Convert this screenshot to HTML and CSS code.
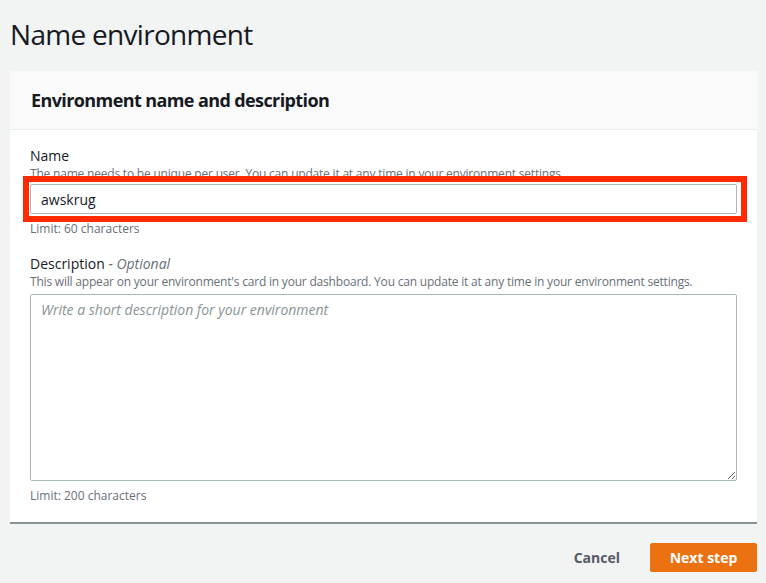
FILE: index.html
```html
<!DOCTYPE html>
<html lang="en">
<head>
<meta charset="utf-8">
<title>Name environment</title>
<link rel="stylesheet" href="styles.css">
</head>
<body>
<div class="page">
  <h1 class="title">Name environment</h1>
  <section class="card">
    <div class="card-header">
      <h2 class="card-title">Environment name and description</h2>
    </div>
    <div class="card-body">
      <div class="field">
        <label class="label" for="name">Name</label>
        <div class="hint">The name needs to be unique per user. You can update it at any time in your environment settings.</div>
        <div class="control">
          <input id="name" class="input" type="text" value="awskrug">
          <div class="highlight"></div>
        </div>
        <div class="limit">Limit: 60 characters</div>
      </div>
      <div class="field field-desc">
        <label class="label" for="desc">Description <span class="optional">- Optional</span></label>
        <div class="hint">This will appear on your environment's card in your dashboard. You can update it at any time in your environment settings.</div>
        <textarea id="desc" class="textarea" placeholder="Write a short description for your environment"></textarea>
        <div class="limit">Limit: 200 characters</div>
      </div>
    </div>
  </section>
  <div class="actions">
    <button class="btn-link" type="button">Cancel</button>
    <button class="btn-primary" type="button">Next step</button>
  </div>
</div>
</body>
</html>
```
FILE: styles.css
```css
* { box-sizing: border-box; }
html, body { margin: 0; padding: 0; }
body {
  background: #f2f3f3;
  font-family: "Open Sans", "Noto Sans", sans-serif;
  color: #16191f;
  width: 766px;
  height: 583px;
  overflow: hidden;
}
.page {
  padding: 0 9px 0 10px;
}
.title {
  margin: 0;
  padding-top: 15px;
  height: 71px;
  font-size: 28px;
  font-weight: 400;
  line-height: 38px;
  color: #16191f;
  letter-spacing: -0.7px;
}
.card {
  background: #fff;
  border-bottom: 2px solid #879596;
}
.card-header {
  background: #fafafa;
  height: 59px;
  border-bottom: 1px solid #eaeded;
  padding: 17px 20px 0 21px;
}
.card-title {
  margin: 0;
  font-size: 18px;
  font-weight: 700;
  line-height: 24px;
  letter-spacing: -0.6px;
}
.card-body {
  padding: 16px 20px 18px 20px;
  display: flex;
  flex-direction: column;
}
.field { display: flex; flex-direction: column; }
.field-desc { margin-top: 17px; }
.label {
  font-size: 14px;
  line-height: 20px;
  color: #16191f;
}
.optional {
  font-style: italic;
  color: #687078;
}
.hint {
  font-size: 12px;
  line-height: 16px;
  color: #687078;
  letter-spacing: -0.2px;
}
.control {
  position: relative;
  margin-top: 2px;
}
.input {
  display: block;
  width: 100%;
  height: 30px;
  border: 1px solid #aab7b8;
  border-radius: 2px;
  padding: 4px 10px;
  font-family: inherit;
  font-size: 14px;
  color: #16191f;
  background: #fff;
}
.highlight {
  position: absolute;
  top: -8px;
  left: -7px;
  right: -10px;
  bottom: -8px;
  border: 6px solid #ff2a00;
  pointer-events: none;
}
.limit {
  font-size: 12px;
  line-height: 16px;
  color: #687078;
  margin-top: 7px;
}
.textarea {
  display: block;
  width: 100%;
  height: 187px;
  margin-top: 4px;
  border: 1px solid #aab7b8;
  border-radius: 2px;
  padding: 4px 10px;
  font-family: inherit;
  font-size: 14px;
  line-height: 22px;
  color: #16191f;
  resize: vertical;
}
.textarea::placeholder {
  font-style: italic;
  color: #879596;
}
.actions {
  display: flex;
  justify-content: flex-end;
  align-items: center;
  gap: 10px;
  margin-top: 19px;
}
.btn-link {
  background: none;
  border: none;
  font-family: inherit;
  font-size: 14px;
  font-weight: 700;
  color: #545b64;
  padding: 4px 20px;
  height: 29px;
}
.btn-primary {
  background: #ec7211;
  border: 1px solid #ec7211;
  border-radius: 2px;
  color: #fff;
  font-family: inherit;
  font-size: 14px;
  font-weight: 700;
  padding: 0;
  white-space: nowrap;
  height: 29px;
  width: 107px;
}
```
